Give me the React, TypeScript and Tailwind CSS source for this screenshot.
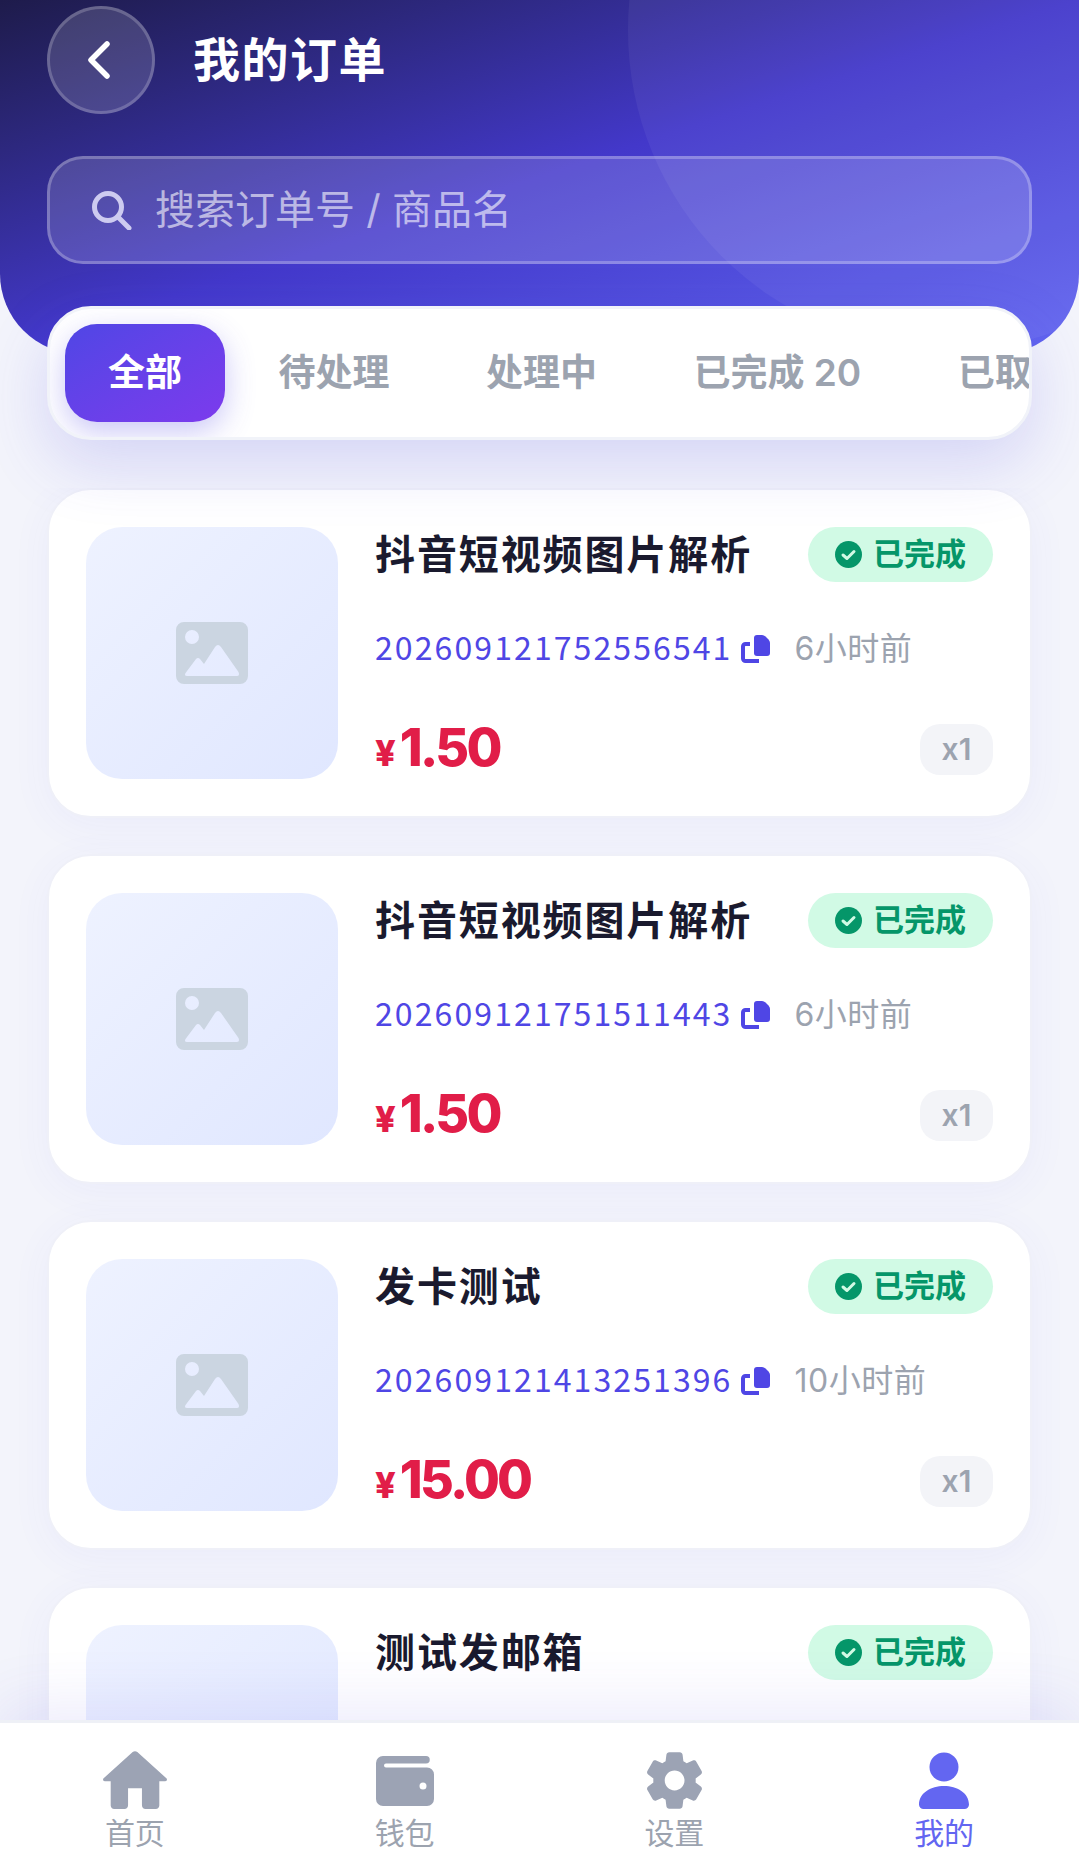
import React from "react";

const orders = [
  { id: 1, title: "抖音短视频图片解析", no: "202609121752556541", time: "6小时前", price: "1.50" },
  { id: 2, title: "抖音短视频图片解析", no: "202609121751511443", time: "6小时前", price: "1.50" },
  { id: 3, title: "发卡测试", no: "202609121413251396", time: "10小时前", price: "15.00" },
  { id: 4, title: "测试发邮箱", no: "", time: "", price: "" },
];

const tabs = ["待处理", "处理中", "已完成 20", "已取消"];

const HomeIcon = () => (
  <svg viewBox="2.8 3.3 18.4 16.7" className="w-[64px] h-[58px] fill-[#9ca3b4]">
    <path d="M10 19v-5h4v5c0 .55.45 1 1 1h3c.55 0 1-.45 1-1v-7h1.7c.46 0 .68-.57.33-.87L12.67 3.6c-.38-.34-.96-.34-1.34 0l-8.36 7.53c-.34.3-.13.87.33.87H5v7c0 .55.45 1 1 1h3c.55 0 1-.45 1-1z" />
  </svg>
);

const WalletIcon = () => (
  <svg viewBox="0 0 58 50" className="w-[58px] h-[50px] mb-[3px] fill-[#9ca3b4]">
    <path
      fillRule="evenodd"
      d="M7 0H50a3.7 3.7 0 0 1 0 7.5H10a2 2 0 0 0 0 4H51a7 7 0 0 1 7 7V43a7 7 0 0 1-7 7H7a7 7 0 0 1-7-7V7a7 7 0 0 1 7-7ZM47 26.5a3.5 3.5 0 1 0 0 7a3.5 3.5 0 1 0 0-7Z"
    />
  </svg>
);

const GearIcon = () => (
  <svg viewBox="2.27 2 19.46 20" className="w-[55px] h-[57px] fill-[#9ca3b4]">
    <path d="M19.5 12c0-.23-.01-.45-.03-.68l1.86-1.41c.4-.3.51-.86.26-1.3l-1.87-3.23c-.25-.44-.79-.62-1.25-.42l-2.15.91c-.37-.26-.76-.49-1.17-.68l-.29-2.31c-.06-.5-.49-.88-.99-.88h-3.73c-.51 0-.94.38-1 .88l-.29 2.31c-.41.19-.8.42-1.17.68l-2.15-.91c-.46-.2-1-.02-1.25.42L2.41 8.62c-.25.44-.14.99.26 1.3l1.86 1.41c-.02.22-.03.44-.03.67s.01.45.03.68l-1.86 1.41c-.4.3-.51.86-.26 1.3l1.87 3.23c.25.44.79.62 1.25.42l2.15-.91c.37.26.76.49 1.17.68l.29 2.31c.06.5.49.88.99.88h3.73c.5 0 .93-.38.99-.88l.29-2.31c.41-.19.8-.42 1.17-.68l2.15.91c.46.2 1 .02 1.25-.42l1.87-3.23c.25-.44.14-.99-.26-1.3l-1.86-1.41c.03-.23.04-.45.04-.68zm-7.46 3.5c-1.93 0-3.5-1.57-3.5-3.5s1.57-3.5 3.5-3.5 3.5 1.57 3.5 3.5-1.57 3.5-3.5 3.5z" />
  </svg>
);

const UserIcon = () => (
  <svg viewBox="0 0 50 57" className="w-[50px] h-[57px] fill-[#6366f1]">
    <circle cx="25" cy="15" r="14.5" />
    <path d="M25 34C38 34 50 41 50 52.5a4.5 4.5 0 0 1-4.5 4.5H4.500a4.500 4.500 0 0 1-4.500-4.500C0 41 12 34 25 34Z" />
  </svg>
);

const CopyIcon = () => (
  <svg viewBox="0 0 29 28" className="w-[29px] h-[28px] shrink-0">
    <path d="M9 9H4.500a2.500 2.500 0 0 0-2.500 2.500V23.500a2.500 2.500 0 0 0 2.500 2.500H18" fill="none" stroke="#4f46e5" strokeWidth="4" />
    <path d="M16 0H21Q23 0 24.500 1.500L27.500 4.500Q29 6 29 8V18a3 3 0 0 1-3 3H16a3 3 0 0 1-3-3V3a3 3 0 0 1 3-3Z" fill="#4f46e5" />
  </svg>
);

const ImageIcon = () => (
  <svg viewBox="0 0 72 62" className="w-[72px] h-[62px] fill-[#cbd5e1]">
    <path
      fillRule="evenodd"
      d="M8 0H64a8 8 0 0 1 8 8V54a8 8 0 0 1-8 8H8a8 8 0 0 1-8-8V8a8 8 0 0 1 8-8ZM16 8a7 7 0 1 0 0 14a7 7 0 1 0 0-14ZM11 54Q8 54 9.500 51L20 37Q22 35 24 37L28 42L39 25Q42 21 45 25L62.500 50Q64 54 61 54Z"
    />
  </svg>
);

const OrderCard = ({ order }: { order: (typeof orders)[number] }) => (
  <div className="flex shrink-0 gap-[37px] p-[37px] rounded-[44px] bg-white border-2 border-[#eff0f8] shadow-[0_8px_40px_rgba(79,70,229,0.05)]">
    <div className="w-[252px] h-[252px] shrink-0 rounded-[36px] flex items-center justify-center bg-gradient-to-br from-[#eef2ff] to-[#e0e7ff]">
      <ImageIcon />
    </div>
    <div className="flex-1 min-w-0 h-[252px] flex flex-col">
      <div className="flex items-start justify-between">
        <div className="text-[40px] leading-[55px] font-bold tracking-[1.9px] text-[#1a1a2e] whitespace-nowrap">{order.title}</div>
        <div className="flex items-center gap-[11px] h-[55px] px-[27px] rounded-full bg-[#d1fae5] text-[31px] font-bold text-[#059669]">
          <svg viewBox="0 0 27 27" className="w-[27px] h-[27px]">
            <circle cx="13.500" cy="13.500" r="13.500" fill="#059669" />
            <path d="M8 14l4 3.500 7-7" fill="none" stroke="#d1fae5" strokeWidth="3" strokeLinecap="round" strokeLinejoin="round" />
          </svg>
          已完成
        </div>
      </div>
      {order.no && (
        <>
          <div className="flex items-center h-[44px] mt-[45px]">
            <span className="pb-[6px] text-[32px] leading-[38px] tracking-[2.1px] text-[#4f46e5] [font-family:'Noto_Sans_CJK_SC',sans-serif]">{order.no}</span>
            <span className="ml-[9px]"><CopyIcon /></span>
            <span className="ml-[24px] text-[32px] tracking-[0.5px] text-[#9ca3af]">{order.time}</span>
          </div>
          <div className="flex items-center justify-between h-[51px] mt-[53px]">
            <div className="flex items-baseline pt-[3px] font-extrabold text-[#e11d48]">
              <span className="text-[36px] mr-[4px]">¥</span>
              <span className="text-[52px] leading-[51px] tracking-[-2.8px]">{order.price}</span>
            </div>
            <div className="flex items-center justify-center w-[73px] h-[51px] rounded-[20px] bg-[#f3f4f8] text-[30px] font-semibold text-[#9ca3af]">x1</div>
          </div>
        </>
      )}
    </div>
  </div>
);

const NavItem = ({ icon, label, active }: { icon: React.ReactNode; label: string; active?: boolean }) => (
  <div className="flex flex-col items-center">
    <div className="h-[57px] flex items-end">{icon}</div>
    <div className={active ? "mt-[6px] text-[30px] leading-[36px] text-[#6366f1]" : "mt-[6px] text-[30px] leading-[36px] text-[#9ca3af]"}>{label}</div>
  </div>
);

export default function App() {
  return (
    <div className="h-[1850px] flex flex-col overflow-hidden bg-[#f3f4fb] [font-family:Inter,'Noto_Sans_CJK_SC',sans-serif]">
      <div className="relative h-[354px] shrink-0 overflow-hidden rounded-b-[80px] px-[47px] pt-[6px] bg-gradient-to-br from-[#1e1b4b] via-[#4338ca] to-[#6366f1]">
        <div className="absolute -top-[290px] -right-[189px] w-[640px] h-[640px] rounded-full bg-white/5" />
        <div className="relative flex items-center gap-[38px]">
          <div className="flex items-center justify-center w-[108px] h-[108px] pr-[4px] rounded-full bg-white/15 border-[3px] border-white/20">
            <svg viewBox="0 0 24 40" className="w-[24px] h-[40px]">
              <path d="M20 4L4 20l16 16" fill="none" stroke="white" strokeWidth="5.500" strokeLinecap="round" strokeLinejoin="round" />
            </svg>
          </div>
          <h1 className="text-[47px] leading-[60px] font-bold tracking-[1.500px] text-white">我的订单</h1>
        </div>
        <div className="relative mt-[42px] h-[108px] flex items-center gap-[23px] pl-[42px] rounded-[36px] bg-white/15 border-[3px] border-white/25">
          <svg viewBox="0 0 40 40" className="w-[40px] h-[40px]">
            <circle cx="16" cy="17" r="13.500" fill="none" stroke="#cdcbf0" strokeWidth="5" />
            <path d="M26 27l11 11" stroke="#cdcbf0" strokeWidth="5" strokeLinecap="round" />
          </svg>
          <span className="text-[40px] text-white/60">搜索订单号 / 商品名</span>
        </div>
      </div>

      <div className="relative z-10 -mt-[48px] mx-[47px] shrink-0 flex gap-[10.5px] p-[15px] h-[134px] overflow-hidden rounded-[44px] bg-white border-[3px] border-[#f1f3f9] shadow-[0_24px_64px_rgba(79,70,229,0.18)]">
        <div className="shrink-0 flex items-center h-[98px] px-[43px] rounded-[32px] text-[37px] font-bold text-white bg-gradient-to-br from-[#4f46e5] to-[#7c3aed] shadow-[0_10px_30px_rgba(79,70,229,0.3)]">全部</div>
        {tabs.map((tab) => (
          <div key={tab} className="shrink-0 flex items-center h-[98px] px-[43px] text-[37px] font-semibold whitespace-nowrap text-[#9ca3af]">{tab}</div>
        ))}
      </div>

      <div className="flex-1 min-h-0 overflow-hidden mt-[48px] px-[47px] flex flex-col gap-[36px]">
        {orders.map((order) => (
          <OrderCard key={order.id} order={order} />
        ))}
      </div>

      <div className="relative z-10 h-[130px] shrink-0 pt-[29px] grid grid-cols-4 justify-items-center bg-white border-t-[3px] border-[#eef0f6] shadow-[0_-16px_60px_rgba(79,70,229,0.1)]">
        <NavItem icon={<HomeIcon />} label="首页" />
        <NavItem icon={<WalletIcon />} label="钱包" />
        <NavItem icon={<GearIcon />} label="设置" />
        <NavItem icon={<UserIcon />} label="我的" active />
      </div>
    </div>
  );
}
